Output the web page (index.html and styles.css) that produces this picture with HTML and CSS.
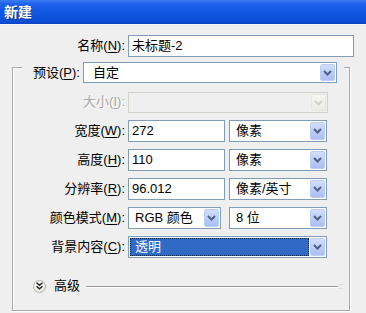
FILE: index.html
```html
<!DOCTYPE html>
<html lang="zh-CN">
<head>
  <meta charset="UTF-8">
  <title>新建</title>
  <link rel="stylesheet" href="styles.css">
</head>
<body>
  <div class="dialog">
    <div class="titlebar">新建</div>

    <div class="row name-row">
      <span class="label">名称(<u>N</u>):</span>
      <div class="input name-input">未标题-2</div>
    </div>

    <div class="group">
      <div class="group-head">
        <span class="label head-label">预设(<u>P</u>):</span>
        <div class="select preset">
          <span class="value">自定</span>
          <span class="btn"><svg width="9" height="6" viewBox="0 0 9 6"><path d="M1 1l3.5 3.5L8 1" fill="none" stroke="currentColor" stroke-width="2"/></svg></span>
        </div>
      </div>

      <div class="rows">
        <div class="row">
          <span class="label disabled">大小(<u>I</u>):</span>
          <div class="select size-select is-disabled">
            <span class="value"></span>
            <span class="btn"><svg width="9" height="6" viewBox="0 0 9 6"><path d="M1 1l3.5 3.5L8 1" fill="none" stroke="currentColor" stroke-width="2"/></svg></span>
          </div>
        </div>
        <div class="row">
          <span class="label">宽度(<u>W</u>):</span>
          <div class="input num-input">272</div>
          <div class="select unit">
            <span class="value">像素</span>
            <span class="btn"><svg width="9" height="6" viewBox="0 0 9 6"><path d="M1 1l3.5 3.5L8 1" fill="none" stroke="currentColor" stroke-width="2"/></svg></span>
          </div>
        </div>
        <div class="row">
          <span class="label">高度(<u>H</u>):</span>
          <div class="input num-input">110</div>
          <div class="select unit">
            <span class="value">像素</span>
            <span class="btn"><svg width="9" height="6" viewBox="0 0 9 6"><path d="M1 1l3.5 3.5L8 1" fill="none" stroke="currentColor" stroke-width="2"/></svg></span>
          </div>
        </div>
        <div class="row">
          <span class="label">分辨率(<u>R</u>):</span>
          <div class="input num-input">96.012</div>
          <div class="select unit">
            <span class="value">像素/英寸</span>
            <span class="btn"><svg width="9" height="6" viewBox="0 0 9 6"><path d="M1 1l3.5 3.5L8 1" fill="none" stroke="currentColor" stroke-width="2"/></svg></span>
          </div>
        </div>
        <div class="row">
          <span class="label">颜色模式(<u>M</u>):</span>
          <div class="select mode">
            <span class="value">RGB 颜色</span>
            <span class="btn"><svg width="9" height="6" viewBox="0 0 9 6"><path d="M1 1l3.5 3.5L8 1" fill="none" stroke="currentColor" stroke-width="2"/></svg></span>
          </div>
          <div class="select unit bits">
            <span class="value">8 位</span>
            <span class="btn"><svg width="9" height="6" viewBox="0 0 9 6"><path d="M1 1l3.5 3.5L8 1" fill="none" stroke="currentColor" stroke-width="2"/></svg></span>
          </div>
        </div>
        <div class="row">
          <span class="label">背景内容(<u>C</u>):</span>
          <div class="select bg-select is-focused">
            <span class="value">透明</span>
            <span class="btn"><svg width="9" height="6" viewBox="0 0 9 6"><path d="M1 1l3.5 3.5L8 1" fill="none" stroke="currentColor" stroke-width="2"/></svg></span>
          </div>
        </div>
      </div>

      <div class="advanced">
        <span class="adv-icon"><svg width="7" height="8" viewBox="0 0 7 8"><path d="M0.5 0.8l3 2.6 3-2.6M0.5 4.3l3 2.6 3-2.6" fill="none" stroke="#222" stroke-width="1.4"/></svg></span>
        <span class="adv-text">高级</span>
        <span class="adv-line"></span>
        <span class="grip"></span>
      </div>
    </div>
  </div>
</body>
</html>
```

FILE: styles.css
```css
:root {
  --window-bg: #efefef;
  --field-border: #7f9db9;
  --text-base: #000000;
  --font-ui: 'Liberation Sans', 'Noto Sans CJK SC', sans-serif;
}
html, body {
  margin: 0;
  padding: 0;
}
body {
  width: 366px;
  height: 313px;
  overflow: hidden;
  background: var(--window-bg);
  font-family: var(--font-ui);
  font-size: 13px;
  color: var(--text-base);
}
.dialog {
  width: 366px;
  height: 313px;
  display: flex;
  flex-direction: column;
}
.titlebar {
  height: 24px;
  line-height: 24px;
  padding-left: 4px;
  color: #fff;
  font-weight: bold;
  font-size: 14px;
  background: linear-gradient(#3a7df4 0, #1e60ea 18%, #0f55e1 60%, #0a4dd6 90%, #0843c0 100%);
  border-bottom: 1px solid #f8f8f8;
  text-shadow: 1px 1px 0 #0a3790;
}

/* rows */
.row {
  display: flex;
  align-items: center;
  height: 22px;
}
.label {
  width: 112px;
  margin-right: 3px;
  text-align: right;
  white-space: nowrap;
  line-height: 20px;
}
.label u {
  text-decoration-thickness: 1px;
  text-underline-offset: 2px;
}
.label.disabled {
  color: #a8a8a8;
  text-shadow: 1px 1px 0 #ffffff;
}
.name-row {
  margin-top: 10px;
}
.name-row .label {
  width: 125px;
}

/* fields */
.input {
  box-sizing: border-box;
  height: 22px;
  line-height: 20px;
  border: 1px solid var(--field-border);
  background: #fff;
  padding-left: 3px;
  white-space: nowrap;
}
.name-input {
  width: 226px;
}
.num-input {
  width: 97px;
  margin-right: 4px;
}
.select {
  box-sizing: border-box;
  height: 22px;
  border: 1px solid var(--field-border);
  background: #fff;
  display: flex;
  align-items: stretch;
}
.select .value {
  flex: 1;
  line-height: 20px;
  padding-left: 6px;
  white-space: nowrap;
  overflow: hidden;
}
.select .btn {
  width: 15px;
  margin: 1px;
  box-sizing: border-box;
  border: 1px solid #bccdf4;
  border-radius: 2px;
  background: linear-gradient(#d2defc, #b8cbf7 60%, #aabff2);
  color: #4d6185;
  display: flex;
  align-items: center;
  justify-content: center;
}
.preset {
  width: 255px;
  height: 21px;
}
.preset .value {
  padding-left: 9px;
  line-height: 19px;
}
.unit {
  width: 98px;
}
.mode {
  width: 93px;
  margin-right: 8px;
}
.size-select {
  width: 200px;
  height: 21px;
}
.bg-select {
  width: 199px;
}
.is-disabled {
  border-color: #d3d3cb;
  background: #efefef;
}
.is-disabled .btn {
  border-color: #e6e6de;
  background: linear-gradient(#f6f6f2, #ecece6);
  color: #d4d4c6;
}
.is-focused .value {
  margin: 1px 0 1px 1px;
  line-height: 18px;
  padding-left: 5px;
  color: #fff;
  background: #316ac5;
  outline: 1px dotted #0d2a5a;
  outline-offset: -1px;
}

/* group box */
.group {
  box-sizing: border-box;
  margin: 10px 0 0 12px;
  width: 338px;
  height: 244px;
  border: 1px solid #a8a8a8;
  box-shadow: inset 1px 1px 0 #fff, 1px 1px 0 #fff;
  display: flex;
  flex-direction: column;
}
.group-head {
  display: flex;
  align-items: center;
  margin: -6px 0 0 9px;
  width: 322px;
  padding: 0 7px 0 11px;
  box-sizing: border-box;
  background: var(--window-bg);
}
.head-label {
  width: auto;
  flex: 1;
  text-align: left;
}
.rows {
  margin-top: 8px;
  display: flex;
  flex-direction: column;
  gap: 7px;
}
.rows .size-select {
  margin-top: 1px;
}

/* advanced */
.advanced {
  display: flex;
  align-items: center;
  margin-top: 21px;
  padding-left: 20px;
  height: 14px;
}
.adv-icon {
  width: 13px;
  height: 13px;
  box-sizing: border-box;
  border: 1px solid #b4b4ac;
  border-radius: 50%;
  background: radial-gradient(circle at 40% 35%, #ffffff, #e2e2da);
  display: flex;
  align-items: center;
  justify-content: center;
}
.adv-text {
  margin-left: 8px;
  line-height: 14px;
}
.adv-line {
  flex: 1;
  margin-left: 6px;
  height: 1px;
  background: #9a9a9a;
  box-shadow: 0 1px 0 #fff;
}
.grip {
  width: 5px;
  height: 5px;
  margin: 0 6px 0 0;
  border-top: 1px solid #dcdcdc;
  border-bottom: 1px solid #dcdcdc;
  box-sizing: border-box;
}
```
